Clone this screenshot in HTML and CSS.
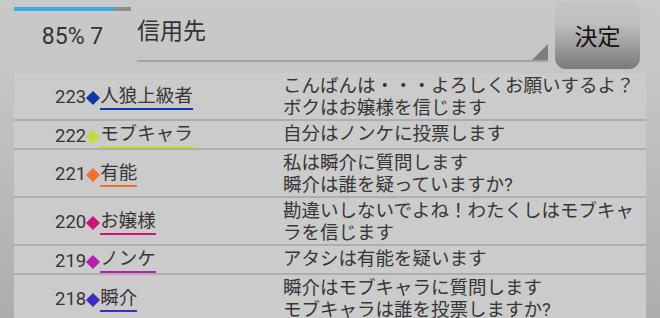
FILE: index.html
```html
<!DOCTYPE html>
<html lang="ja">
<head>
  <meta charset="UTF-8">
  <title>投票</title>
  <link rel="stylesheet" href="styles.css">
</head>
<body>

  <div class="top">
    <div class="status">
      <div class="progress"><div class="progress-fill"></div></div>
      <div class="status-text">85% 7</div>
    </div>

    <div class="spinner">
      <span class="spinner-text">信用先</span>
      <span class="spinner-arrow"></span>
    </div>

    <button class="btn">決定</button>
  </div>

  <div class="log">
    <div class="row">
      <div class="who"><span class="num">223</span><span class="dia blue"></span><span class="name blue">人狼上級者</span></div>
      <div class="msg">こんばんは・・・よろしくお願いするよ？<br>ボクはお嬢様を信じます</div>
    </div>
    <div class="row">
      <div class="who"><span class="num">222</span><span class="dia lime"></span><span class="name lime">モブキャラ</span></div>
      <div class="msg">自分はノンケに投票します</div>
    </div>
    <div class="row">
      <div class="who"><span class="num">221</span><span class="dia orange"></span><span class="name orange">有能</span></div>
      <div class="msg">私は瞬介に質問します<br>瞬介は誰を疑っていますか?</div>
    </div>
    <div class="row">
      <div class="who"><span class="num">220</span><span class="dia pink"></span><span class="name pink">お嬢様</span></div>
      <div class="msg">勘違いしないでよね！わたくしはモブキャラを信じます</div>
    </div>
    <div class="row">
      <div class="who"><span class="num">219</span><span class="dia purple"></span><span class="name purple">ノンケ</span></div>
      <div class="msg">アタシは有能を疑います</div>
    </div>
    <div class="row">
      <div class="who"><span class="num">218</span><span class="dia indigo"></span><span class="name indigo">瞬介</span></div>
      <div class="msg">瞬介はモブキャラに質問します<br>モブキャラは誰を投票しますか?</div>
    </div>
  </div>

</body>
</html>
```

FILE: styles.css
```css
:root {
  --text: #363636;
  --panel: #cbcbcb;
  --line: #adadad;
  --font: Roboto, "Noto Sans CJK JP", sans-serif;
}

html, body {
  height: 100%;
}

body {
  margin: 0;
  overflow: hidden;
  font-family: var(--font);
  color: var(--text);
  background: linear-gradient(to bottom, #c9c9c9 0, #c6c6c6 70px, #adadad 318px);
}

/* header */
.top {
  display: flex;
  height: 73px;
}

.status {
  width: 117px;
  margin-left: 14px;
  text-align: center;
}

.progress {
  height: 4px;
  margin-top: 7px;
  background: #8e8e8e;
}

.progress-fill {
  width: 100px;
  height: 100%;
  background: #3aaddc;
}

.status-text {
  margin-top: 11px;
  font-size: 23px;
  line-height: 30px;
  color: #333;
}

.spinner {
  position: relative;
  box-sizing: border-box;
  width: 411px;
  height: 62px;
  margin-left: 6px;
  padding-top: 17px;
  border-bottom: 2px solid #a2a2a2;
  font-size: 23px;
  line-height: 30px;
  color: #333;
}

.spinner-arrow {
  position: absolute;
  right: 0;
  bottom: 0;
  width: 0;
  height: 0;
  border-left: 16px solid transparent;
  border-bottom: 16px solid #7e7e7e;
}

.btn {
  width: 85px;
  height: 68px;
  margin: 1px 0 0 7px;
  padding: 0;
  border: none;
  border-radius: 11px;
  background: linear-gradient(to bottom, #c6c6c6 0, #bdbdbd 35%, #7a7a7a 100%);
  font-family: var(--font);
  font-size: 23px;
  color: #111;
  cursor: pointer;
}

/* log list */
.log {
  height: calc(100% - 73px);
  margin: 0 14px;
  background: var(--panel);
  overflow: hidden;
}

.row {
  display: grid;
  grid-template-columns: 269px 1fr;
  padding-top: 2px;
  border-bottom: 2px solid var(--line);
  font-size: 18.5px;
  line-height: 22px;
}

.who {
  display: flex;
  align-items: center;
  padding-left: 41px;
  white-space: nowrap;
}

.dia {
  display: inline-block;
  width: 10px;
  height: 10px;
  margin: 0 2px;
  transform: rotate(45deg);
  position: relative;
  top: 1px;
}

.name {
  padding-bottom: 1px;
  border-bottom: 2px solid;
  color: var(--text);
}

.msg {
  padding-right: 8px;
}

.dia.blue { background: #0f39a8; }
.name.blue { border-color: #0f39a8; }
.dia.lime { background: #c4da3a; }
.name.lime { border-color: #c4da3a; }
.dia.orange { background: #f07030; }
.name.orange { border-color: #f07030; }
.dia.pink { background: #d0137a; }
.name.pink { border-color: #d0137a; }
.dia.purple { background: #b41eb4; }
.name.purple { border-color: #b41eb4; }
.dia.indigo { background: #3d2bc2; }
.name.indigo { border-color: #3d2bc2; }
```
